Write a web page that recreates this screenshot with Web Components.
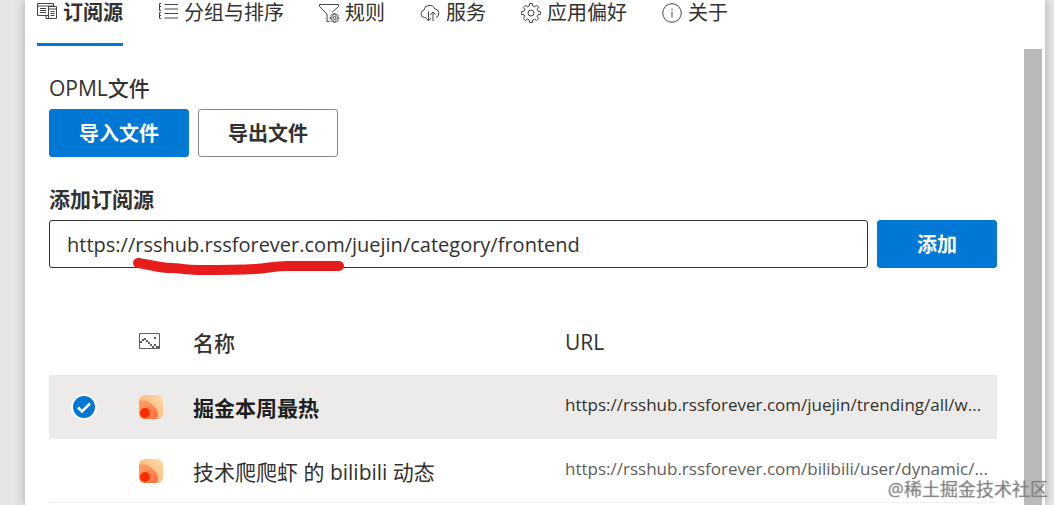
<!DOCTYPE html>
<html lang="zh-CN">
<head>
<meta charset="utf-8">
<meta name="viewport" content="width=device-width, initial-scale=1">
<title>设置 - 订阅源</title>
<style>
  body {
    margin: 0;
    background: #e7e6e4;
    color: #323130;
    font-family: "Open Sans", "Noto Sans CJK SC", sans-serif;
    font-size: 20px;
  }
</style>
</head>
<body>
<settings-panel>
  <settings-tabs slot="tabs">
    <settings-tab icon="source" selected>订阅源</settings-tab>
    <settings-tab icon="group">分组与排序</settings-tab>
    <settings-tab icon="filter">规则</settings-tab>
    <settings-tab icon="cloud">服务</settings-tab>
    <settings-tab icon="gear">应用偏好</settings-tab>
    <settings-tab icon="info">关于</settings-tab>
  </settings-tabs>
  <opml-section>
    <push-button primary>导入文件</push-button>
    <push-button>导出文件</push-button>
  </opml-section>
  <add-source value="https://rsshub.rssforever.com/juejin/category/frontend"></add-source>
  <source-table></source-table>
</settings-panel>
<water-mark>@稀土掘金技术社区</water-mark>

<script>
const gear = (cx, cy, outer, inner, teeth) => {
  const points = [];
  for (let i = 0; i < teeth; i++) {
    for (const [offset, radius] of [[-.31, inner], [-.2, outer], [.2, outer], [.31, inner]]) {
      const a = (i + offset) * 2 * Math.PI / teeth - Math.PI / 2;
      points.push((cx + radius * Math.cos(a)).toFixed(2) + ' ' + (cy + radius * Math.sin(a)).toFixed(2));
    }
  }
  return `<path d="M${points.join('L')}Z"/>`;
};

const ICONS = {
  source: '<path d="M11 12.500H.5V.5h16v3M.5 3h16M3 5.500h6M3 7.500h6M3 9.500h6M11.500 3.500h8v12h-8zM9 12.500v3h3M11.500 6h8M13.500 8.500h4M13.500 10.500h4M13.500 12.500h4"/>',
  group: '<path d="M6.500 1.500H20M6.500 6H20M6.500 10.500H20M6.500 15H20M3 .5H1.500v7H3M3 9.500H1.500v6H3M1.500 3.500H3M1.500 12.500H3"/>',
  filter: '<path d="M10.500 18.500H8V11L.5 3.500v-2h19v2L13 9.500"/>' + gear(15.5, 15, 4.5, 3.1, 8) + '<circle cx="15.500" cy="15" r="1.500"/>',
  cloud: '<path d="M6 14.500H4.500A3.800 3.800 0 0 1 4 7a5.600 5.600 0 0 1 10.800-1A4.400 4.400 0 0 1 16 14.500M8.500 8.500v9M5.800 15l2.700 2.700 2.700-2.700M13 18V9M10.300 11.700L13 9l2.700 2.700"/>',
  gear: gear(10, 10, 9.5, 7.2, 8) + '<circle cx="10" cy="10" r="3"/>',
  info: '<circle cx="10" cy="10" r="9.300"/><path d="M10 8.500v6M10 5.500v1.500"/>'
};

const define = (name, markup, setup) => {
  const template = document.createElement('template');
  template.innerHTML = markup;
  customElements.define(name, class extends HTMLElement {
    constructor() {
      super();
      this.attachShadow({ mode: 'open' }).append(template.content.cloneNode(true));
    }
    connectedCallback() {
      if (setup) setup(this, this.shadowRoot);
    }
  });
};

define('settings-panel', `
  <style>
    :host {
      display: flex; flex-direction: column; box-sizing: border-box;
      min-height: 100vh; margin: 0 9px 0 25px; padding-right: 3px;
      background: #fff; box-shadow: 0 0 10px #0004;
    }
    .body { display: flex; flex: 1; margin-top: 3px; }
    main { flex: 1; min-width: 0; padding: 25px 27px 0 24px; }
    .thumb { width: 18px; background: #bababa; }
  </style>
  <slot name="tabs"></slot>
  <div class="body"><main><slot></slot></main><div class="thumb"></div></div>`);

define('settings-tabs', `
  <style>:host { display: block } nav { display: flex; gap: 35px; padding-left: 12px; }</style>
  <nav role="tablist"><slot></slot></nav>`);

define('settings-tab', `
  <style>
    :host { display: block; }
    button {
      display: flex; align-items: center; gap: 6px; padding: 0 0 17px;
      border: 0; border-bottom: 3px solid transparent; background: none;
      color: inherit; font: inherit; line-height: 26px; white-space: nowrap;
    }
    :host([selected]) button { border-color: #0078d4; font-weight: 600; }
    svg { width: 20px; height: 20px; fill: none; stroke: #444; stroke-width: 1; }
  </style>
  <button type="button" role="tab"><svg viewBox="0 0 20 20" aria-hidden="true"></svg><span><slot></slot></span></button>`,
  (host, root) => {
    root.querySelector('svg').innerHTML = ICONS[host.getAttribute('icon')];
    root.querySelector('button').setAttribute('aria-selected', host.hasAttribute('selected'));
  });

define('push-button', `
  <style>
    :host { display: block; }
    button {
      box-sizing: border-box; width: 100%; height: 48px; padding: 0 29px 2px;
      border: 1px solid #8a8886; border-radius: 3px; background: #fff;
      color: inherit; font: inherit; font-weight: 600; white-space: nowrap;
    }
    :host([primary]) button { border-color: #0078d4; background: #0078d4; color: #fff; }
  </style>
  <button type="button"><slot></slot></button>`);

define('opml-section', `
  <style>
    :host { display: block; }
    .title { margin-bottom: 7px; font-size: 21px; font-weight: 500; line-height: 28px; }
    .row { display: flex; gap: 9px; }
  </style>
  <div class="title">OPML文件</div>
  <div class="row"><slot></slot></div>`);

define('add-source', `
  <style>
    :host { display: block; margin-top: 28px; }
    label { display: block; margin-bottom: 7px; font-size: 21px; font-weight: 600; line-height: 28px; }
    .row { display: flex; gap: 9px; }
    .field { position: relative; flex: 1; min-width: 0; }
    input {
      box-sizing: border-box; width: 100%; height: 48px; padding: 0 17px;
      border: 1px solid #323130; border-radius: 3px; background: #fff;
      color: #323130; font: inherit; font-weight: 370; outline: 0; display: block;
    }
    .pen { position: absolute; left: 83px; top: 36px; width: 214px; height: 20px; fill: none; stroke: #e71d1d; stroke-width: 10; stroke-linecap: round; stroke-linejoin: round; }
    push-button { width: 120px; }
  </style>
  <label for="url">添加订阅源</label>
  <div class="row">
    <div class="field">
      <input id="url" type="text" spellcheck="false">
      <svg class="pen" viewBox="0 0 214 20" aria-hidden="true"><path d="M6 7C20 9 28 12 39 12C50 12 52 14 66 14C86 14 105 14 123 13C137 12 142 10 156 10H207"/></svg>
    </div>
    <push-button primary>添加</push-button>
  </div>`,
  (host, root) => { root.querySelector('input').value = host.getAttribute('value'); });

define('source-logo', `
  <style>:host { display: block; } svg { display: block; width: 24px; height: 24px; }</style>
  <svg viewBox="0 0 24 24" aria-hidden="true">
    <defs>
      <clipPath id="c"><rect width="24" height="24" rx="6"/></clipPath>
      <linearGradient id="a" x1="0" y1="1" x2="1" y2="0"><stop stop-color="#ffa45f"/><stop offset="1" stop-color="#fddcab"/></linearGradient>
      <linearGradient id="b" x1="0" y1="0" x2="1" y2="1"><stop stop-color="#ffa269"/><stop offset="1" stop-color="#ff713c"/></linearGradient>
    </defs>
    <g clip-path="url(#c)">
      <path fill="url(#a)" d="M0 0h24v24H0z"/>
      <path fill="url(#b)" d="M0 5C11 5 19 13 19 20c0 2-1 3-2 4H0z"/>
      <circle cx="6" cy="18" r="5" fill="#ff2c00"/>
    </g>
  </svg>`);

define('round-check', `
  <style>
    :host { display: grid; width: 26px; height: 26px; }
    input, svg { grid-area: 1 / 1; width: 26px; height: 26px; margin: 0; }
    input { box-sizing: border-box; appearance: none; border: 2px solid #fff; border-radius: 50%; background: #fff; }
    input:checked { background: #0078d4; }
    svg { fill: none; stroke: #fff; stroke-width: 2.500; pointer-events: none; }
  </style>
  <input type="checkbox" checked aria-label="选择 掘金本周最热">
  <svg viewBox="0 0 26 26" aria-hidden="true"><path d="M7 13.500l4 4 8-8"/></svg>`);

define('source-table', `
  <style>
    :host { display: block; margin-top: 41px; }
    table { width: 100%; table-layout: fixed; border-collapse: separate; border-spacing: 0; text-align: left; }
    th, td { box-sizing: border-box; height: 64px; padding: 0; overflow: hidden; white-space: nowrap; text-overflow: ellipsis; }
    th { height: 66px; padding-bottom: 1px; font-size: 21px; font-weight: 500; }
    td { font-size: 21px; border-bottom: 1px solid #f0efee; }
    .check { width: 90px; } .icon { width: 54px; } .name { width: 372px; }
    td:first-child { padding-left: 22px; }
    td:last-child { padding: 0 0 5px; color: #605e5c; font-size: 17px; font-weight: 370; }
    .selected td { border-color: #edebe9; background: #edebe9; }
    .selected td:nth-child(3) { color: #201f1e; font-weight: 600; }
    .selected td:last-child { color: #323130; }
    th svg { display: block; width: 21px; height: 17px; fill: none; stroke: #605e5c; }
    .dots { fill: #605e5c; stroke: none; }
  </style>
  <table>
    <thead><tr>
      <th class="check"></th>
      <th class="icon"><svg viewBox="0 0 21 17" role="img" aria-label="图标"><path d="M.5.5h20v15H.5z"/><path class="dots" d="M1 8h2v2H1zM3 6h2v2H3zM5 5h2v2H5zM7 7h2v2H7zM9 9h2v2H9zM11 11h2v2h-2zM13 13h2v2h-2zM15 11h2v2h-2zM17 13h3v2h-3zM15 4h2v2h-2z"/></svg></th>
      <th class="name">名称</th>
      <th>URL</th>
    </tr></thead>
    <tbody>
      <tr class="selected"><td><round-check></round-check></td><td><source-logo></source-logo></td><td>掘金本周最热</td><td>https://rsshub.rssforever.com/juejin/trending/all/w...</td></tr>
      <tr><td></td><td><source-logo></source-logo></td><td>技术爬爬虾 的 bilibili 动态</td><td>https://rsshub.rssforever.com/bilibili/user/dynamic/...</td></tr>
    </tbody>
  </table>`);

define('water-mark', `
  <style>
    :host {
      position: absolute; right: 6px; bottom: 3px; color: #8886; font-size: 18px; line-height: 26px;
      text-shadow: 0 0 1px #777; pointer-events: none; white-space: nowrap;
    }
  </style>
  <slot></slot>`);
</script>
</body>
</html>
